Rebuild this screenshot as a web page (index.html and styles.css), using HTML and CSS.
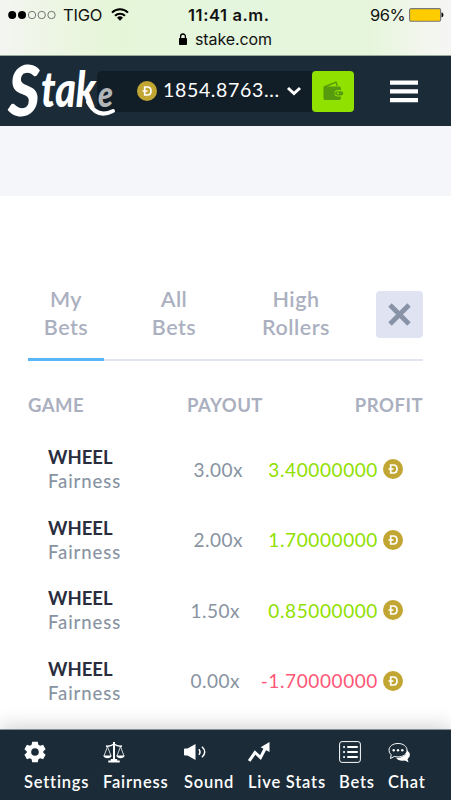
FILE: index.html
```html
<!DOCTYPE html>
<html lang="en">
<head>
<meta charset="utf-8">
<title>Stake</title>
<link rel="stylesheet" href="styles.css">
</head>
<body>
<svg class="defs" width="0" height="0">
  <symbol id="coin" viewBox="0 0 20 20">
    <circle cx="10" cy="10" r="10" fill="#c2a633"/>
    <path d="M7.700 6h2.700c2.400 0 3.600 1.700 3.600 4s-1.200 4-3.600 4H7.700z M5.500 10h5" fill="none" stroke="#fff" stroke-width="1.700"/>
  </symbol>
</svg>
<div class="status">
  <div class="status-row">
    <div class="carrier">
      <svg width="49" height="10" viewBox="0 0 49 10"><g fill="#000"><circle cx="4.2" cy="5" r="4"/><circle cx="14" cy="5" r="4"/></g><g fill="none" stroke="#555" stroke-width=".8"><circle cx="24" cy="5" r="3.7"/><circle cx="33.7" cy="5" r="3.7"/><circle cx="43.5" cy="5" r="3.7"/></g></svg>
      <span class="tigo">TIGO</span>
      <svg class="wifi" width="18" height="13" viewBox="0 0 18 13"><g fill="none" stroke="#000" stroke-width="2"><path d="M1 4.6a11.3 11.3 0 0 1 16 0"/><path d="M4 7.7a7.2 7.2 0 0 1 10 0"/></g><path d="M6 9.8a4.3 4.3 0 0 1 6 0L9 12.8z"/></svg>
    </div>
    <div class="time">11:41 a.m.</div>
    <div class="power"><span class="pct">96%</span>
      <svg width="35" height="14" viewBox="0 0 35 14"><rect x=".6" y=".6" width="31" height="12.6" rx="1.5" fill="#fc0" stroke="#777" stroke-width="1.1"/><path d="M32.5 4.6h.6c1.8.8 1.8 3.8 0 4.6h-.6z"/></svg>
    </div>
  </div>
  <div class="url"><svg width="8" height="12" viewBox="0 0 8 12"><rect y="5" width="8" height="7" rx=".8"/><path d="M1.6 6V3.4a2.4 2.4 0 0 1 4.8 0V6" fill="none" stroke="#000" stroke-width="1.3"/></svg><span>stake.com</span></div>
</div>
<header class="header">
  <svg class="logo" width="110" height="70" viewBox="0 0 110 70" fill="#fff">
    <text class="logo-s" x="4" y="60" textLength="32" lengthAdjust="spacingAndGlyphs">S</text>
    <text class="logo-t" x="37" y="51" textLength="55" lengthAdjust="spacingAndGlyphs">tak</text>
    <text class="logo-e" x="94" y="51" textLength="15" lengthAdjust="spacingAndGlyphs">e</text>
    <path d="M84 46q9 17 25 9" fill="none" stroke="#fff" stroke-width="4" stroke-linecap="round"/>
  </svg>
  <div class="balance">
    <svg class="coin" width="20" height="20"><use href="#coin"/></svg>
    <span class="amount">1854.8763...</span>
    <svg class="chev" width="16" height="10" viewBox="0 0 16 10"><path d="M2 2l6 5.5L14 2" fill="none" stroke="#fff" stroke-width="3"/></svg>
  </div>
  <div class="wallet"><svg width="21" height="20" viewBox="0 0 21 20"><path d="M1.2 6L13 1.2 14.2 5" fill="none" stroke="#569a0d" stroke-width="1.4"/><path d="M.5 5.5H16q2 0 2 2V9h-3.2a3.2 3.2 0 0 0 0 6.4H18V17q0 2-2 2H2q-1.500 0-1.500-1.500z" fill="#569a0d"/><rect x="12.2" y="10.200" width="8" height="4.200" rx="2.1" fill="#569a0d"/><circle cx="15" cy="12.300" r="1" fill="#90e000"/></svg></div>
  <svg class="burger" width="28" height="23" viewBox="0 0 28 23" fill="#fff"><path d="M0 .5h28v4.200H0zM0 9.300h28v4.200H0zM0 18.100h28v4.200H0z"/></svg>
</header>
<div class="band"></div>
<main class="panel">
  <div class="tabs">
    <div class="tab active">My<br>Bets</div>
    <div class="tab all">All<br>Bets</div>
    <div class="tab high">High<br>Rollers</div>
    <div class="close"><svg width="23" height="23" viewBox="0 0 23 23"><path d="M2 2l19 19M21 2L2 21" stroke="#8893a7" stroke-width="4.800"/></svg></div>
  </div>
  <div class="head"><span class="h-game">GAME</span><span class="h-pay">PAYOUT</span><span class="h-profit">PROFIT</span></div>
  <div class="row"><div class="game"><b>WHEEL</b><span>Fairness</span></div><div class="pay">3.00x</div><div class="profit">3.40000000</div><svg class="coin" width="20" height="20"><use href="#coin"/></svg></div>
  <div class="row"><div class="game"><b>WHEEL</b><span>Fairness</span></div><div class="pay">2.00x</div><div class="profit">1.70000000</div><svg class="coin" width="20" height="20"><use href="#coin"/></svg></div>
  <div class="row"><div class="game"><b>WHEEL</b><span>Fairness</span></div><div class="pay narrow">1.50x</div><div class="profit">0.85000000</div><svg class="coin" width="20" height="20"><use href="#coin"/></svg></div>
  <div class="row"><div class="game"><b>WHEEL</b><span>Fairness</span></div><div class="pay narrow">0.00x</div><div class="profit loss">-1.70000000</div><svg class="coin" width="20" height="20"><use href="#coin"/></svg></div>
</main>
<nav class="nav">
  <div class="item settings"><svg width="22" height="22" viewBox="0 0 22 22"><path fill="#fff" fill-rule="evenodd" d="M8.200.8h5.600l.6 3 1.800 1 2.900-1 2.500 4.400-2.300 2v1.600l2.300 2-2.500 4.400-2.900-1-1.800 1-.6 3H8.200l-.6-3-1.800-1-2.900 1L.4 13.800l2.300-2v-1.600l-2.300-2 2.500-4.400 2.900 1 1.800-1zM11 7.200a3.800 3.800 0 1 0 0 7.600 3.800 3.800 0 0 0 0-7.600z"/></svg><span>Settings</span></div>
  <div class="item fairness"><svg width="22" height="22" viewBox="0 0 22 22"><g fill="none" stroke="#fff"><path d="M11 1v17" stroke-width="2"/><path d="M3 5q4 .8 8-2 4 2.800 8 2" stroke-width="1.500"/><path d="M4.500 5.500L1 15m3.500-9.500L8 15M17.500 5.500L14 15m3.500-9.500L21 15" stroke-width=".8"/></g><path fill="#fff" d="M.3 14.500h8.400q-.8 2.800-4.200 2.800T.3 14.500zM13.300 14.500h8.400q-.8 2.800-4.200 2.800t-4.200-2.800zM7.800 18h6.400v1.500h2.500v2H5.300v-2h2.500z"/></svg><span>Fairness</span></div>
  <div class="item sound"><svg width="22" height="22" viewBox="0 0 22 22"><path fill="#fff" d="M0 8.500q0-1 1-1h2.500L11.500 3v16l-8-4.500H1q-1 0-1-1z"/><g fill="none" stroke="#fff" stroke-width="1.500"><path d="M14.800 8.200q2.500 2.800 0 5.600"/><path d="M18 5.800q5.500 5.200 0 10.400"/></g></svg><span>Sound</span></div>
  <div class="item stats"><svg width="22" height="22" viewBox="0 0 22 22"><path d="M1.200 20L7 11.500l5.500 5L17.500 7" fill="none" stroke="#fff" stroke-width="3"/><path fill="#fff" d="M12.700 6.200L21.500 1v10z"/></svg><span>Live Stats</span></div>
  <div class="item bets"><svg width="22" height="22" viewBox="0 0 22 22"><rect x=".6" y=".6" width="20.800" height="20.800" rx="2.500" fill="none" stroke="#fff" stroke-width="1"/><g stroke="#fff" stroke-width="2" stroke-linecap="round"><path d="M9 6h9M9 11h9M9 16h9M5 6h.1M5 11h.1M5 16h.1"/></g></svg><span>Bets</span></div>
  <div class="item chat"><svg width="22" height="22" viewBox="0 0 22 22"><path fill="#fff" d="M19 9q5.500 5 .5 9l1 3.200-3.800-1.700q-6 1-8.500-2.500Q18 17 19 9z"/><path d="M10 2.500c5.200 0 9 2.800 9 6.700s-3.800 6.700-9 6.700q-2 0-3.600-.5L2.500 17.500l.7-3.700Q1 12 1 9.200C1 5.300 4.800 2.500 10 2.500z" fill="#1b2b38" stroke="#fff"/><g fill="#fff"><circle cx="5.700" cy="9.300" r="1.200"/><circle cx="10" cy="9.300" r="1.200"/><circle cx="14.300" cy="9.300" r="1.200"/></g></svg><span>Chat</span></div>
</nav>
</body>
</html>
```
FILE: styles.css
```css
* { box-sizing: border-box; }
body { margin: 0; width: 451px; height: 800px; overflow: hidden; display: flex; flex-direction: column; background: #fff; font-family: Lato, "Open Sans", sans-serif; }
svg { display: block; flex: none; }
.defs { position: absolute; }
.status { height: 56px; border-bottom: 1px solid #9aa99a; background: linear-gradient(90deg, #f4f5f3 0, #f0f5e9 30px, #e6f6d8 110px, #e4f6de 225px, #e6f6dc 370px, #f3f6ee 425px, #f5f5f4 451px); font-family: Inter, sans-serif; font-size: 16.5px; color: #111; }
.status-row { display: grid; grid-template-columns: 188px 1fr 90px; height: 29px; align-items: center; }
.carrier { display: flex; align-items: center; padding-left: 8px; }
.tigo { margin-left: 6px; width: 41px; letter-spacing: -.2px; white-space: nowrap; }
.wifi { margin-left: 7px; }
.time { font-weight: 600; letter-spacing: .6px; }
.power { display: flex; align-items: center; padding-left: 9px; }
.pct { width: 35px; margin-right: 4px; letter-spacing: -.5px; }
.url { display: flex; align-items: center; gap: 8px; padding-left: 179px; height: 19px; font-size: 16px; letter-spacing: -.1px; }
.header { height: 70px; background: #1b2b38; display: flex; align-items: center; }
.logo { position: relative; z-index: 1; margin-left: 4px; overflow: visible; font-family: Lato, sans-serif; font-style: italic; font-weight: 900; }
.logo-s { font-size: 71px; }
.logo-t { font-size: 50px; }
.logo-e { font-size: 36px; fill: #b3b6b9; }
.balance { width: 215px; height: 41px; margin-left: -17px; padding-left: 40px; border-radius: 5px 0 0 5px; background: #121e27; display: flex; align-items: center; }
.amount { width: 117px; margin: -3px 0 0 6px; color: #fff; font-size: 19.500px; letter-spacing: .65px; white-space: nowrap; }
.chev { margin-left: 6px; }
.wallet { width: 42px; height: 41px; border-radius: 4px; background: #90e000; display: grid; place-items: center; }
.burger { margin-left: 36px; }
.band { height: 70px; background: #f5f6f9; }
.panel { flex: 1; padding: 84px 28px 0; }
.tabs { height: 81px; border-bottom: 2px solid #e1e4f3; display: flex; }
.tab { text-align: center; color: #abb0c0; font-weight: 600; font-size: 21.500px; line-height: 28px; padding-top: 5px; letter-spacing: .5px; }
.active { width: 76px; height: 81px; border-bottom: 3px solid #56b6f7; }
.all { margin-left: 32px; width: 76px; }
.high { margin-left: 36px; width: 96px; }
.close { width: 47px; height: 47px; margin: 11px 0 0 auto; background: #e0e3f1; border-radius: 4px; display: grid; place-items: center; }
.head { display: flex; height: 73px; padding-top: 31px; color: #abb0c0; font-weight: 700; font-size: 18.500px; line-height: 26px; letter-spacing: .5px; }
.h-game { width: 159px; }
.h-profit { margin-left: auto; }
.row { height: 70.500px; display: flex; align-items: center; color: #8893a2; }
.game { width: 145px; padding-left: 20px; display: flex; flex-direction: column; font-size: 18.500px; line-height: 24px; }
.game b { color: #292d3e; font-weight: 700; }
.game span { font-weight: 500; letter-spacing: .9px; }
.pay { width: 70px; text-align: right; font-size: 19px; letter-spacing: .5px; }
.narrow { padding-right: 3px; }
.profit { width: 135px; text-align: right; color: #90e000; font-size: 19px; letter-spacing: .6px; }
.loss { color: #ff5777; }
.row .coin { margin-left: 5px; }
.nav { position: relative; height: 71px; background: #1b2b38; box-shadow: 0 -3px 18px rgba(0,0,0,.18); display: flex; padding: 11px 0 0 24px; border-top: 1px solid #85909a; color: #fff; }
.item { display: flex; flex-direction: column; gap: 8px; font-size: 16.500px; line-height: 23px; font-weight: 600; letter-spacing: .8px; white-space: nowrap; }
.settings { width: 79px; } .fairness { width: 81px; } .sound { width: 64px; } .stats { width: 91px; } .bets { width: 49px; }
```
